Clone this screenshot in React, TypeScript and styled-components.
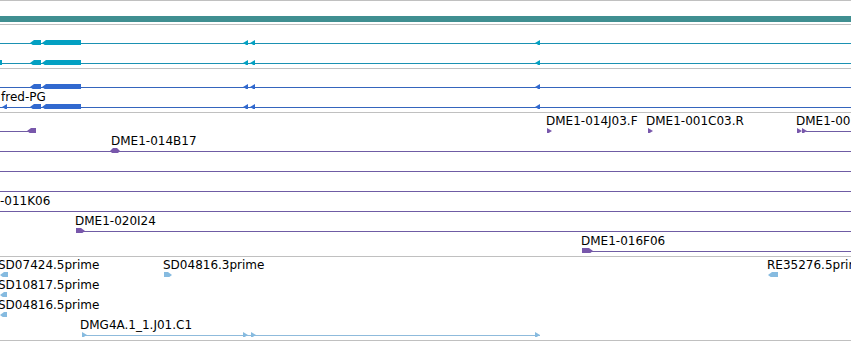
import React from 'react';
import styled, { createGlobalStyle } from 'styled-components';

const GlobalStyle = createGlobalStyle`
    html, body {
        margin: 0;
        padding: 0;
        background: #ffffff;
    }
`;

type Glyph =
    | { kind: 'line'; x1: number; x2: number }
    | { kind: 'box' | 'exonL' | 'exonR' | 'hex'; x1: number; x2: number }
    | { kind: 'tipL' | 'tipR'; x: number };

type Label = { x: number; text: string };

type RowData = { glyphs: Glyph[]; labels?: Label[] };

type TrackData = { id: string; fill: string; stroke: string; rows: RowData[] };

const W = 851;

// gene model used by the two transcript tracks
const transcript = (extra: Glyph[] = []): Glyph[] => [
    { kind: 'line', x1: 0, x2: W },
    ...extra,
    { kind: 'exonL', x1: 30, x2: 41 },
    { kind: 'exonL', x1: 42, x2: 81 },
    { kind: 'tipL', x: 243 },
    { kind: 'tipL', x: 250 },
    { kind: 'tipL', x: 535 },
];

const full: Glyph = { kind: 'line', x1: 0, x2: W };

const tracks: TrackData[] = [
    {
        id: 'genes',
        fill: '#03a0c2',
        stroke: '#1b91b2',
        rows: [
            { glyphs: transcript() },
            { glyphs: transcript([{ kind: 'box', x1: 0, x2: 2 }]) },
        ],
    },
    {
        id: 'cds',
        fill: '#3169cf',
        stroke: '#3565bd',
        rows: [
            { glyphs: transcript() },
            { glyphs: transcript([{ kind: 'tipL', x: 2 }]), labels: [{ x: 1, text: 'fred-PG' }] },
        ],
    },
    {
        id: 'bac',
        fill: '#7857ab',
        stroke: '#6f5ca4',
        rows: [
            {
                glyphs: [
                    { kind: 'line', x1: 0, x2: 28 },
                    { kind: 'exonL', x1: 27, x2: 36 },
                    { kind: 'tipR', x: 547 },
                    { kind: 'tipR', x: 648 },
                    { kind: 'line', x1: 806, x2: W },
                    { kind: 'tipR', x: 797 },
                    { kind: 'tipR', x: 802 },
                ],
                labels: [
                    { x: 546, text: 'DME1-014J03.F' },
                    { x: 646, text: 'DME1-001C03.R' },
                    { x: 796, text: 'DME1-001C03.F' },
                ],
            },
            {
                glyphs: [full, { kind: 'hex', x1: 110, x2: 120 }],
                labels: [{ x: 111, text: 'DME1-014B17' }],
            },
            { glyphs: [full] },
            { glyphs: [full] },
            { glyphs: [full], labels: [{ x: 0, text: '-011K06' }] },
            {
                glyphs: [
                    { kind: 'line', x1: 76, x2: W },
                    { kind: 'exonR', x1: 76, x2: 85 },
                ],
                labels: [{ x: 75, text: 'DME1-020I24' }],
            },
            {
                glyphs: [
                    { kind: 'line', x1: 582, x2: W },
                    { kind: 'exonR', x1: 582, x2: 593 },
                ],
                labels: [{ x: 581, text: 'DME1-016F06' }],
            },
        ],
    },
    {
        id: 'est',
        fill: '#86bbe0',
        stroke: '#8fbbdc',
        rows: [
            {
                glyphs: [
                    { kind: 'exonL', x1: 0, x2: 8 },
                    { kind: 'exonR', x1: 164, x2: 172 },
                    { kind: 'exonL', x1: 768, x2: 778 },
                ],
                labels: [
                    { x: -2, text: 'SD07424.5prime' },
                    { x: 163, text: 'SD04816.3prime' },
                    { x: 767, text: 'RE35276.5prime' },
                ],
            },
            {
                glyphs: [{ kind: 'exonL', x1: 0, x2: 7 }],
                labels: [{ x: -2, text: 'SD10817.5prime' }],
            },
            {
                glyphs: [{ kind: 'exonL', x1: 0, x2: 7 }],
                labels: [{ x: -2, text: 'SD04816.5prime' }],
            },
            {
                glyphs: [
                    { kind: 'line', x1: 82, x2: 540 },
                    { kind: 'tipR', x: 82 },
                    { kind: 'tipR', x: 243 },
                    { kind: 'tipR', x: 251 },
                    { kind: 'tipR', x: 535 },
                ],
                labels: [{ x: 80, text: 'DMG4A.1_1.J01.C1' }],
            },
        ],
    },
];

const points = (g: Glyph): string => {
    switch (g.kind) {
        case 'box':
            return `${g.x1},15 ${g.x2},15 ${g.x2},21 ${g.x1},21`;
        case 'exonL':
            return `${g.x1},18 ${g.x1 + 4},15 ${g.x2},15 ${g.x2},21 ${g.x1 + 4},21`;
        case 'exonR':
            return `${g.x1},15 ${g.x2 - 4},15 ${g.x2},18 ${g.x2 - 4},21 ${g.x1},21`;
        case 'hex':
            return `${g.x1},18 ${g.x1 + 3},15 ${g.x2 - 3},15 ${g.x2},18 ${g.x2 - 3},21 ${g.x1 + 3},21`;
        case 'tipL':
            return `${g.x},18 ${g.x + 5},15 ${g.x + 5},21`;
        case 'tipR':
            return `${g.x + 5},18 ${g.x},15 ${g.x},21`;
        default:
            return '';
    }
};

const Browser = styled.div`
    width: ${W}px;
    overflow: hidden;
    border-top: 1px solid #c0c0c0;
    font-family: "DejaVu Sans", "Liberation Sans", sans-serif;
    font-size: 12px;
    color: #000;
`;

const Overview = styled.div`
    padding: 15px 0 2px;
`;

const OverviewBar = styled.div`
    height: 6px;
    background: #408f91;
`;

const Track = styled.section`
    border-top: 1px solid #c0c0c0;
    padding-bottom: 3px;

    &:last-child {
        border-bottom: 1px solid #c0c0c0;
    }
`;

const Row = styled.div`
    position: relative;
    height: 20px;
`;

const Glyphs = styled.svg`
    position: absolute;
    top: 0;
    left: 0;
    display: block;
`;

const FeatureLabel = styled.span<{ $x: number }>`
    position: absolute;
    top: 1px;
    left: ${p => p.$x}px;
    line-height: 14px;
    white-space: nowrap;
`;

const TrackRow = ({ row, fill, stroke }: { row: RowData; fill: string; stroke: string }) => (
    <Row>
        <Glyphs width={W} height={20} viewBox={`0 0 ${W} 20`}>
            {row.glyphs.map((g, i) =>
                g.kind === 'line' ? (
                    <rect key={i} x={g.x1} y={18} width={g.x2 - g.x1} height={1} fill={stroke} shapeRendering="crispEdges"/>
                ) : (
                    <polygon key={i} points={points(g)} fill={fill}/>
                )
            )}
        </Glyphs>
        {row.labels?.map(l => (
            <FeatureLabel key={l.text} $x={l.x}>{l.text}</FeatureLabel>
        ))}
    </Row>
);

const App = () => (
    <>
        <GlobalStyle/>
        <Browser>
            <Overview>
                <OverviewBar/>
            </Overview>
            {tracks.map(t => (
                <Track key={t.id}>
                    {t.rows.map((r, i) => (
                        <TrackRow key={i} row={r} fill={t.fill} stroke={t.stroke}/>
                    ))}
                </Track>
            ))}
        </Browser>
    </>
);

export default App;
